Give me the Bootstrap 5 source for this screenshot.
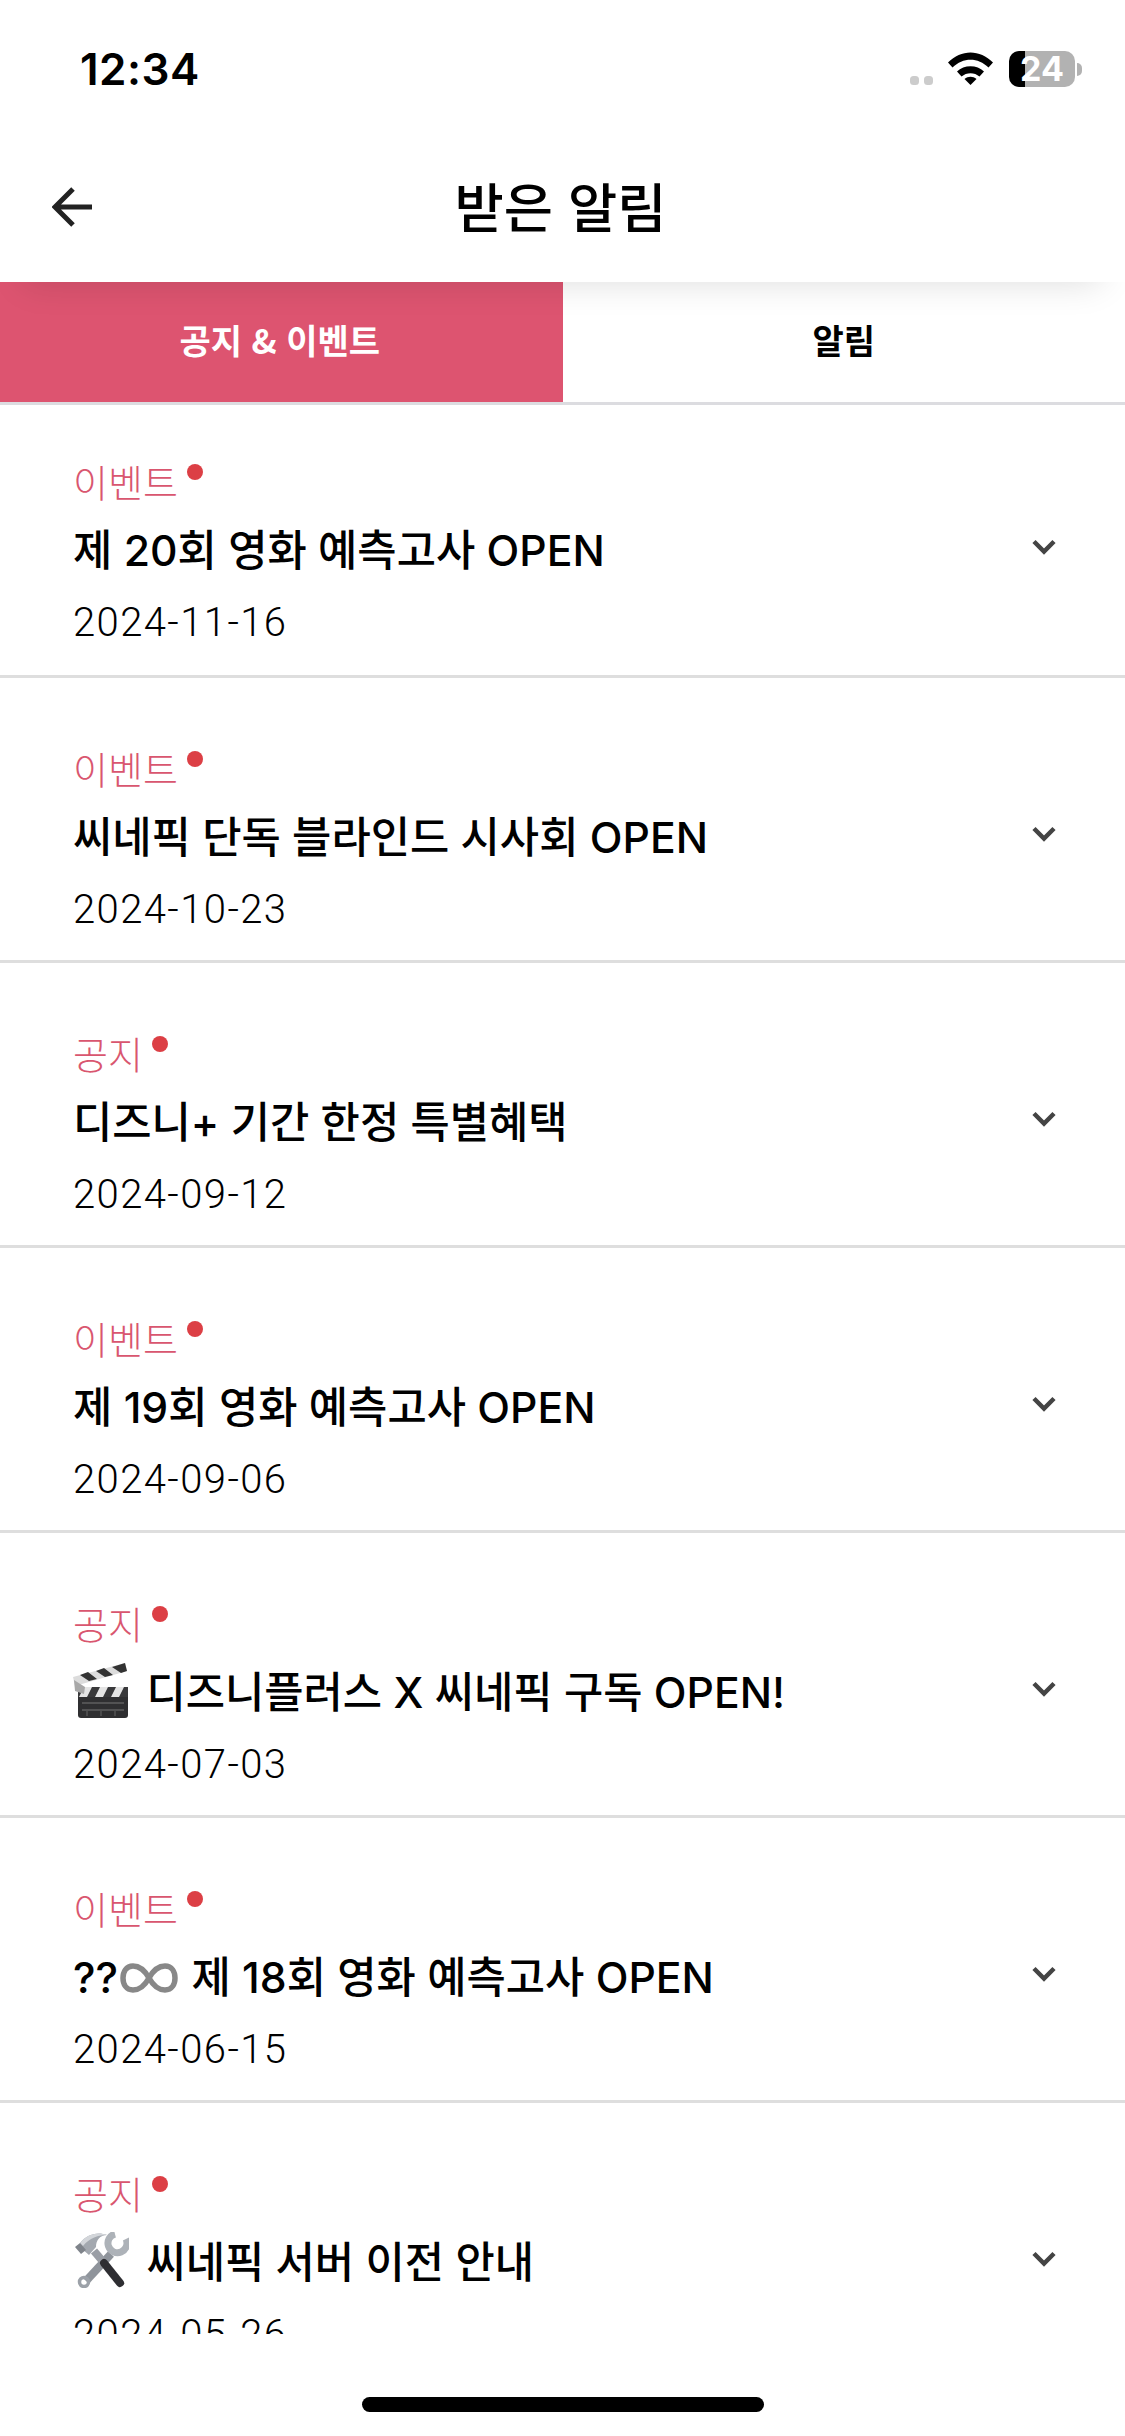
<!DOCTYPE html>
<html lang="ko">
<head>
    <meta charset="UTF-8">
    <meta name="viewport" content="width=device-width, initial-scale=1.0">
    <title>받은 알림</title>
    <link href="https://cdn.jsdelivr.net/npm/bootstrap@5.3.2/dist/css/bootstrap.min.css" rel="stylesheet">
    <style>
        body { font-family: "Noto Sans CJK KR", "Noto Sans", sans-serif; color: #000; background: #fff; }
        .app-page { height: 2436px; width: 1125px; overflow: hidden; }
        .status-bar { height: 122px; padding: 44px 43px 0 80px; }
        .status-time { font-family: Inter, sans-serif; font-weight: 600; font-size: 44px; line-height: 50px; letter-spacing: .5px; }
        .status-right { margin-top: 7px; }
        .status-dots { width: 23px; height: 9px; margin-top: 25px; margin-right: 15px; }
        .status-wifi { width: 45px; height: 33px; margin-top: 1px; margin-right: 16px; }
        .battery-box { width: 66px; height: 36px; border-radius: 10px; background: linear-gradient(90deg, #000 16px, #b2b2b2 16px); color: #fff; font-family: Inter, sans-serif; font-weight: 700; font-size: 34px; line-height: 36px; text-align: center; }
        .battery-nub { width: 5px; height: 13px; border-radius: 0 6px 6px 0; background: #b2b2b2; margin-left: 2px; }
        .top-header { height: 160px; padding-left: 52px; padding-top: 9px; z-index: 2; box-shadow: 0 24px 34px -24px rgba(0,0,0,.14); background: #fff; }
        .top-title { font-size: 53.5px; font-weight: 500; line-height: 1; margin-left: -2px; margin-top: -3px; }
        .back-arrow { width: 40px; height: 40px; }
        .tab-row { height: 123px; border-bottom: 3px solid #dcdce0; }
        .tab-item { height: 120px; font-size: 34px; font-weight: 700; line-height: 1; padding-bottom: 4px; }
        .tab-on { background: #dd5470; color: #fff; padding-right: 3px; }
        .notice-list { flex: 1 1 0; min-height: 0; overflow: hidden; }
        .notice-row { height: 285px; border-bottom: 3px solid #dedede; padding: 71px 69px 0 73px; }
        .notice-row:first-child { height: 273px; padding-top: 57px; }
        .notice-type { font-size: 38px; font-weight: 300; color: #d9566f; line-height: 37px; }
        .unread-dot { width: 16px; height: 16px; border-radius: 50%; background: #dc3f45; margin-left: 9px; margin-top: 2px; }
        .notice-title { font-family: Inter, "Noto Sans CJK KR", sans-serif; font-size: 42.7px; font-weight: 500; line-height: 50px; margin-top: 27px; }
        .notice-date { font-family: Roboto, sans-serif; font-size: 40px; font-weight: 300; letter-spacing: 1.4px; line-height: 44px; margin-top: 25px; }
        .row-chevron { width: 24px; height: 16px; margin-top: 77px; }
        .emoji-art { width: 56px; height: 56px; vertical-align: 4px; margin: -14px 6px -14px 0; }
        .emoji-inf { width: 58px; height: 30px; vertical-align: 4px; margin: -4px 2px; }
        .home-area { height: 102px; padding-top: 63px; }
        .home-bar { width: 402px; height: 15px; border-radius: 8px; background: #000; }
    </style>
</head>
<body>
    <div class="app-page d-flex flex-column">
        <!--Statusbar-->
        <div class="status-bar d-flex justify-content-between align-items-start">
            <div class="status-time">12:34</div>
            <div class="status-right d-flex align-items-start">
                <svg class="status-dots" viewBox="0 0 23 9"><rect width="9" height="9" rx="3.5" fill="#ccc"/><rect x="14" width="9" height="9" rx="3.5" fill="#ccc"/></svg>
                <svg class="status-wifi" viewBox="0 0 45 33">
                    <path d="M0 10.5C13 -3 32 -3 45 10.5l-4.500 5C30 5 15 5 4.500 15.500z" fill="#000"/>
                    <path d="M9 19.500C16 12.500 29 12.500 36 19.500l-4.500 5C26.500 20 18.500 20 13.500 24.500z" fill="#000"/>
                    <path d="M16.500 27C20 24 25 24 28.500 27L22.500 33z" fill="#000"/>
                </svg>
                <div class="battery-box">24</div>
                <div class="battery-nub align-self-center"></div>
            </div>
        </div>
        <!--Kopfzeile-->
        <div class="top-header position-relative d-flex align-items-center">
            <svg class="back-arrow" viewBox="0 0 40 40" fill="none" stroke="#222" stroke-width="5"><path d="M21 2L3 20 21 38M3 20h37"/></svg>
            <div class="top-title position-absolute start-50 translate-middle-x">받은 알림</div>
        </div>
        <!--Tabs-->
        <div class="tab-row d-flex">
            <div class="tab-item tab-on w-50 d-flex align-items-center justify-content-center">공지 &amp; 이벤트</div>
            <div class="tab-item w-50 d-flex align-items-center justify-content-center">알림</div>
        </div>
        <!--Liste-->
        <div class="notice-list" id="notice-list"></div>
        <div class="home-area d-flex justify-content-center">
            <div class="home-bar"></div>
        </div>
    </div>
    <script src="https://cdn.jsdelivr.net/npm/bootstrap@5.3.2/dist/js/bootstrap.bundle.min.js"></script>
    <script>
        // Emojis als SVG, es gibt keine Emoji-Schrift
        const clapper = `<svg class="emoji-art" viewBox="0 0 56 56">
            <rect x="5" y="25" width="50" height="31" rx="3" fill="#2f2f31"/>
            <rect x="5" y="25" width="50" height="10" fill="#39393b"/>
            <path d="M11 25h8l-5 10H6zM27 25h8l-5 10h-8zM43 25h8l-5 10h-8z" fill="#e4e4e4"/>
            <path d="M9 41h42M9 48h42" stroke="#777" stroke-width="1"/>
            <path d="M14 49v5M28 49v5M42 49v5" stroke="#666" stroke-width="1"/>
            <path d="M0 15L52 1l2 8L2 24z" fill="#dcdcdc"/>
            <path d="M7 13l9 6 8-2-9-7zM23 9l9 6 8-2-9-7zM39 5l9 6 6-2-2-8z" fill="#333"/>
            <path d="M1 18l11 7-1 7-9-3z" fill="#a8a8a8"/>
        </svg>`;
        const tools = `<svg class="emoji-art" viewBox="0 0 56 56">
            <path d="M38 22L13 49" stroke="#8f949b" stroke-width="8" fill="none"/>
            <circle cx="11" cy="50" r="4.500" fill="none" stroke="#9ca1a8" stroke-width="3.500"/>
            <path d="M53 7A9.500 9.500 0 1 1 42 2" fill="none" stroke="#adb2b8" stroke-width="7"/>
            <path d="M21 19L32 32" stroke="#9a9ea5" stroke-width="8" fill="none"/>
            <path d="M31 31L47 51" stroke="#2e2e32" stroke-width="8" stroke-linecap="round" fill="none"/>
            <path d="M7 11C13 3 24 -1 34 3 27 3 23 8 23 15L16 23 9 17z" fill="#a3a8af"/>
            <path d="M7 11C13 3 24 -1 34 3 26 3 16 6 10 14z" fill="#d3d6da"/>
            <path d="M2 15l5-4 6 7-5 4z" fill="#7f848b"/>
        </svg>`;
        const infinity = `<svg class="emoji-inf" viewBox="0 0 58 30" fill="none" stroke="#888" stroke-width="5.500"><path d="M29 15C24 6 19 3 13 3 6 3 3 9 3 15s3 12 10 12c6 0 11-3 16-12s10-12 16-12c7 0 10 6 10 12s-3 12-10 12c-6 0-11-3-16-12z"/></svg>`;

        const notices = [
            { type: '이벤트', title: '제 20회 영화 예측고사 OPEN', date: '2024-11-16' },
            { type: '이벤트', title: '씨네픽 단독 블라인드 시사회 OPEN', date: '2024-10-23' },
            { type: '공지', title: '디즈니+ 기간 한정 특별혜택', date: '2024-09-12' },
            { type: '이벤트', title: '제 19회 영화 예측고사 OPEN', date: '2024-09-06' },
            { type: '공지', title: `${clapper} 디즈니플러스 X 씨네픽 구독 OPEN!`, date: '2024-07-03' },
            { type: '이벤트', title: `??${infinity} 제 18회 영화 예측고사 OPEN`, date: '2024-06-15' },
            { type: '공지', title: `${tools} 씨네픽 서버 이전 안내`, date: '2024-05-26' }
        ];

        const noticeList = document.getElementById('notice-list');
        notices.forEach(notice => {
            const item = document.createElement('div');
            item.className = 'notice-row d-flex justify-content-between align-items-start';
            item.innerHTML = `
                <div>
                    <div class="d-flex align-items-start">
                        <span class="notice-type">${notice.type}</span><span class="unread-dot"></span>
                    </div>
                    <div class="notice-title">${notice.title}</div>
                    <div class="notice-date">${notice.date}</div>
                </div>
                <svg class="row-chevron" viewBox="0 0 24 16" fill="none" stroke="#444" stroke-width="4.500"><path d="M2 2.500l10 10 10-10"/></svg>
            `;
            noticeList.appendChild(item);
        });
    </script>
</body>
</html>
